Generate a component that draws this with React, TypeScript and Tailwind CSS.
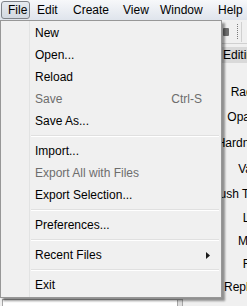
type Entry =
  | { kind: "item"; label: string; disabled?: boolean; shortcut?: string; sub?: boolean }
  | { kind: "sep" }

const entries: Entry[] = [
  { kind: "item", label: "New" },
  { kind: "item", label: "Open..." },
  { kind: "item", label: "Reload" },
  { kind: "item", label: "Save", disabled: true, shortcut: "Ctrl-S" },
  { kind: "item", label: "Save As..." },
  { kind: "sep" },
  { kind: "item", label: "Import..." },
  { kind: "item", label: "Export All with Files", disabled: true },
  { kind: "item", label: "Export Selection..." },
  { kind: "sep" },
  { kind: "item", label: "Preferences..." },
  { kind: "sep" },
  { kind: "item", label: "Recent Files", sub: true },
  { kind: "sep" },
  { kind: "item", label: "Exit" },
]

const menus = [
  { label: "File", w: "w-[29px]" },
  { label: "Edit", w: "w-[36px]" },
  { label: "Create", w: "w-[50px]" },
  { label: "View", w: "w-[37px]" },
  { label: "Window", w: "w-[58px]" },
  { label: "Help", w: "w-[40px]" },
]

// panel labels behind the menu, right aligned to one column edge
const props = [
  { label: "Radius", h: "h-[24px]" },
  { label: "Opacity", h: "h-[25px]" },
  { label: "Hardness", h: "h-[27px]" },
  { label: "Value", h: "h-[25px]" },
  { label: "Brush Type", h: "h-[25px]" },
  { label: "Lock", h: "h-[23px]" },
  { label: "Mode", h: "h-[23px]" },
  { label: "Rate", h: "h-[23px]" },
  { label: "Replace", h: "h-[24px]" },
]

function MenuBar() {
  return (
    <div className="flex h-[20px] shrink-0 items-stretch bg-gradient-to-b from-[#f7f8fa] to-[#dfe4ec] pt-[1px] pl-[1px]">
      {menus.map((m, i) => (
        <div
          key={m.label}
          className={`${m.w} flex h-[18px] shrink-0 items-center text-[12px] text-black ${
            i === 0 ? "rounded-[3px] border border-[#7f8389] bg-gradient-to-b from-[#e6eaef] to-[#d3d9e1] pl-[6px]" : "pl-[7px]"
          }`}
        >
          {m.label}
        </div>
      ))}
    </div>
  )
}

function Background() {
  return (
    <div className="flex flex-1 min-h-0">
      <div className="flex w-[200px] shrink-0 flex-col">
        <div className="mt-auto flex h-[7px]">
          <div className="ml-[2px] w-[175px] border-t border-l border-[#a6a6a6] bg-white" />
          <div className="w-[6px] border-x border-t border-[#a6a6a6] bg-[#dcdcdc]" />
        </div>
      </div>
      <div className="flex w-[120px] shrink-0 flex-col">
        <div className="flex h-[24px] items-center border-b border-[#d0d0d0] pl-[23px]">
          <div className="h-[8px] w-[6px] rounded-[1px] bg-[#6e6e6e]" />
          <div className="ml-[8px] h-[15px] w-[3px] border-l border-dotted border-[#7a7a7a]" />
          <div className="ml-[1px] h-[20px] w-[1px] bg-[#d0d0d0]" />
        </div>
        <div className="ml-[20px] mt-[3px] flex h-[16px] items-center bg-[#d9d9d9] pl-[3px] text-[12px] text-black">
          Editing
        </div>
        <div className="mt-[17px] flex flex-col">
          {props.map((p) => (
            <div key={p.label} className={`${p.h} flex w-[68px] items-center justify-end whitespace-nowrap text-[12px] text-black`}>
              {p.label}
            </div>
          ))}
        </div>
      </div>
    </div>
  )
}

function FileMenu() {
  return (
    <div className="absolute left-0 top-[20px] w-[222px] border border-[#979797] bg-[#f0f0f0] py-[1px] shadow-[3px_3px_2px_rgba(0,0,0,0.4)]">
      <div className="absolute top-0 bottom-0 left-[28px] w-[2px] border-l border-[#e2e3e3] border-r-white" />
      {entries.map((e, i) =>
        e.kind === "sep" ? (
          <div key={i} className="relative flex h-[8px] items-center pl-[30px] pr-[2px]">
            <div className="h-[2px] w-full border-t border-[#e0e0e0] bg-white" />
          </div>
        ) : (
          <div
            key={i}
            className={`relative flex h-[22px] items-center pl-[34px] text-[12px] ${
              e.disabled ? "text-[#6d6d6d]" : "text-black"
            }`}
          >
            <span className="flex-1 whitespace-nowrap">{e.label}</span>
            {e.shortcut && <span className="mr-[19px]">{e.shortcut}</span>}
            {e.sub && (
              <svg width="4" height="7" viewBox="0 0 4 7" className="mr-[11px]">
                <path d="M0 0 L4 3.5 L0 7 Z" fill="#1a1a1a" />
              </svg>
            )}
          </div>
        ),
      )}
    </div>
  )
}

export default function App() {
  return (
    <div
      className="relative flex h-[306px] w-[247px] flex-col overflow-hidden bg-[#f0f0f0]"
      style={{ fontFamily: '"Liberation Sans", Arial, sans-serif' }}
    >
      <MenuBar />
      <Background />
      <FileMenu />
    </div>
  )
}
